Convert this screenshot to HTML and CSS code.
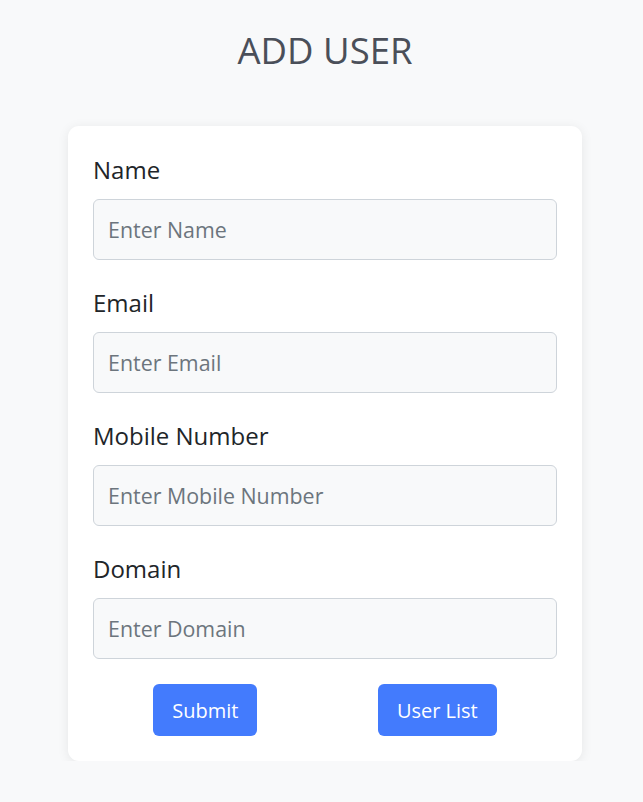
FILE: index.html
```html
<!DOCTYPE html>
<html>
<head>
<meta charset="utf-8">
<link rel="stylesheet" href="styles.css">
</head>
<body>
<main class="page">
<h1 class="title">ADD USER</h1>
<form class="card">
  <div class="field">
    <label class="label">Name</label>
    <input class="input" type="text" placeholder="Enter Name">
  </div>
  <div class="field">
    <label class="label">Email</label>
    <input class="input" type="text" placeholder="Enter Email">
  </div>
  <div class="field">
    <label class="label">Mobile Number</label>
    <input class="input" type="text" placeholder="Enter Mobile Number">
  </div>
  <div class="field">
    <label class="label">Domain</label>
    <input class="input" type="text" placeholder="Enter Domain">
  </div>
  <div class="actions">
    <button class="btn" type="button">Submit</button>
    <button class="btn" type="button">User List</button>
  </div>
</form>
</main>
</body>
</html>
```
FILE: styles.css
```css
html, body {
  margin: 0;
  padding: 0;
  background: #f8f9fa;
  font-family: "Open Sans", "Noto Sans", sans-serif;
}
.page {
  padding-left: 7px;
}
.title {
  margin: 0;
  padding-top: 24px;
  text-align: center;
  font-weight: 400;
  font-size: 36.5px;
  line-height: 52px;
  color: #4a4f59;
}
.card {
  box-sizing: border-box;
  width: 514px;
  margin: 50px auto 0;
  background: #fff;
  border-radius: 11px;
  box-shadow: 0 2px 12px rgba(0,0,0,0.08);
  padding: 28px 25px 25px;
  display: flex;
  flex-direction: column;
}
.field {
  display: flex;
  flex-direction: column;
  margin-bottom: 27px;
}
.field:nth-last-child(2) {
  margin-bottom: 0;
}
.label {
  font-size: 24px;
  line-height: 32px;
  color: #212529;
  margin-bottom: 13px;
}
.input {
  box-sizing: border-box;
  height: 61px;
  width: 100%;
  background: #f8f9fa;
  border: 1px solid #ced4da;
  border-radius: 6px;
  padding: 0 14px;
  font-family: inherit;
  font-size: 21.4px;
  color: #212529;
}
.input::placeholder {
  color: #6c757d;
}
.actions {
  display: flex;
  justify-content: space-around;
  margin-top: 25px;
}
.btn {
  height: 52px;
  padding: 0 19px;
  border: none;
  border-radius: 6px;
  background: #437bfd;
  color: #fff;
  font-family: inherit;
  font-size: 20px;
}
```
